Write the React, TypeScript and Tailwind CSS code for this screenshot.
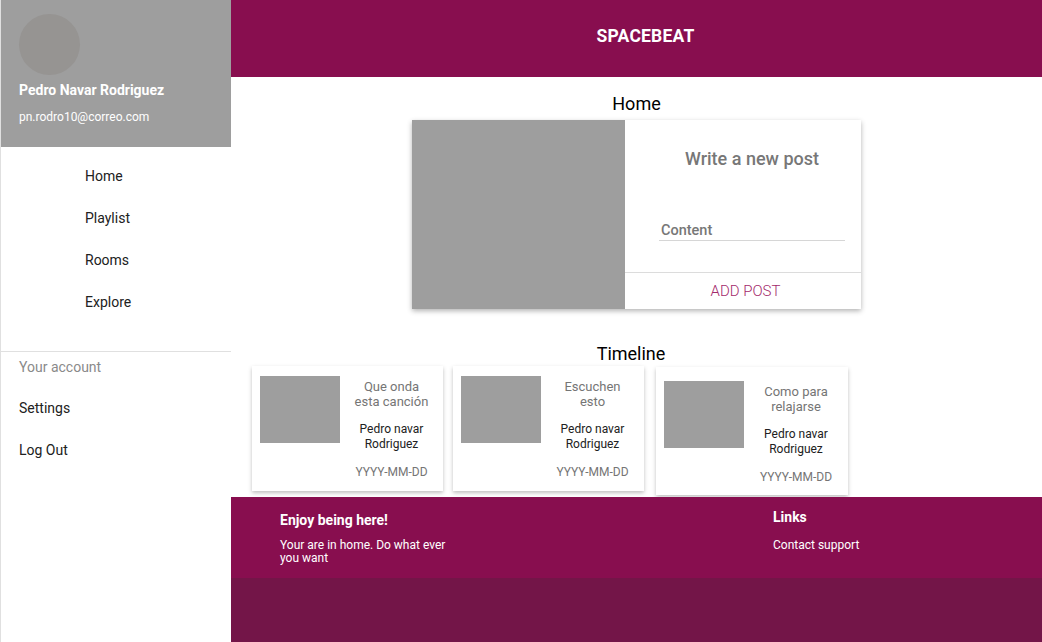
const navItems = ["Home", "Playlist", "Rooms", "Explore"];

type Post = { title: string[]; author: string[]; date: string; shifted?: boolean };

const posts: Post[] = [
  { title: ["Que onda", "esta canción"], author: ["Pedro navar", "Rodriguez"], date: "YYYY-MM-DD" },
  { title: ["Escuchen", "esto"], author: ["Pedro navar", "Rodriguez"], date: "YYYY-MM-DD" },
  { title: ["Como para", "relajarse"], author: ["Pedro navar", "Rodriguez"], date: "YYYY-MM-DD", shifted: true },
];

const PostCard = ({ post }: { post: Post }) => {
  return (
    <div
      className={
        post.shifted
          ? "w-[192px] mt-[1px] h-[128px] bg-white shadow-[0_2px_4px_rgba(0,0,0,0.25)] flex pl-[8px] pt-[14px]"
          : "w-[191px] h-[125px] bg-white shadow-[0_2px_4px_rgba(0,0,0,0.25)] flex pl-[8px] pt-[10px]"
      }
    >
      <div className="w-[80px] h-[67px] bg-[#9e9e9e] shrink-0"></div>
      <div className="flex-1 flex flex-col items-center text-center">
        <p className="text-[13px] leading-[15px] text-[#757575] pt-[3px]">
          {post.title[0]}
          <br />
          {post.title[1]}
        </p>
        <p className="text-[12px] leading-[15px] text-[#212121] mt-[13px]">
          {post.author[0]}
          <br />
          {post.author[1]}
        </p>
        <p className="text-[12px] leading-[15px] text-[#757575] mt-[13px]">{post.date}</p>
      </div>
    </div>
  );
};

export default function App() {
  return (
    <div className="w-[1042px] h-[642px] flex overflow-hidden bg-white font-['Roboto',sans-serif]">
      {/* sidebar */}
      <aside className="w-[231px] shrink-0 h-full border-l border-[#e0e0e0] flex flex-col">
        <div className="h-[147px] bg-[#9e9e9e] pt-[14px] px-[18px] text-white">
          <div className="w-[61px] h-[61px] rounded-full bg-[#969492]"></div>
          <p className="mt-[7px] text-[14px] leading-[16px] font-bold">Pedro Navar Rodriguez</p>
          <p className="mt-[11px] text-[12px] leading-[16px]">pn.rodro10@correo.com</p>
        </div>
        <nav className="pt-[8px]">
          {navItems.map((item) => (
            <div key={item} className="h-[42px] flex items-center pl-[84px] text-[14px] text-[#212121]">
              {item}
            </div>
          ))}
        </nav>
        <div className="mt-[28px] border-t border-[#e0e0e0]"></div>
        <div className="h-[30px] flex items-center pl-[18px] text-[14px] text-[#8a8a8a]">Your account</div>
        <div className="mt-[5px]">
          <div className="h-[42px] flex items-center pl-[18px] text-[14px] text-[#212121]">Settings</div>
          <div className="h-[42px] flex items-center pl-[18px] text-[14px] text-[#212121]">Log Out</div>
        </div>
      </aside>

      {/* main */}
      <main className="flex-1 flex flex-col h-full">
        <header className="h-[77px] shrink-0 bg-[#880e4f] flex items-center justify-center pl-[18px] pb-[4px]">
          <span className="text-white font-bold text-[17.5px] tracking-[0.2px]">SPACEBEAT</span>
        </header>

        <section className="flex-1 flex flex-col items-center">
          <h2 className="mt-[15px] text-[18px] leading-[24px] text-black">Home</h2>
          <div className="mt-[4px] w-[449px] h-[189px] flex bg-white shadow-[0_2px_5px_rgba(0,0,0,0.3)]">
            <div className="w-[213px] h-full bg-[#9e9e9e]"></div>
            <div className="flex-1 flex flex-col">
              <div className="h-[153px] border-b border-[#dcdcdc] pl-[34px] pr-[16px] pt-[28px]">
                <p className="text-[18px] leading-[22px] font-medium text-[#777777] text-center">Write a new post</p>
                <p className="mt-[53px] border-b border-[#d6d6d6] pb-[1px] text-[14.5px] leading-[16px] text-[#777777] font-medium pl-[2px]">
                  Content
                </p>
              </div>
              <div className="flex-1 flex items-center justify-center pl-[5px] text-[15px] font-light text-[#a3296b]">
                ADD POST
              </div>
            </div>
          </div>

          <h2 className="mt-[33px] mr-[11px] text-[18px] leading-[24px] text-black">Timeline</h2>
          <div className="self-start pl-[21px] flex items-start">
            <PostCard post={posts[0]} />
            <div className="ml-[10px]">
              <PostCard post={posts[1]} />
            </div>
            <div className="ml-[12px]">
              <PostCard post={posts[2]} />
            </div>
          </div>
        </section>

        <footer className="h-[81px] shrink-0 bg-[#880e4f] text-white flex pl-[49px]">
          <div className="w-[493px] pt-[14px]">
            <p className="text-[14px] leading-[18px] font-bold">Enjoy being here!</p>
            <p className="mt-[10px] w-[185px] text-[12px] leading-[13px]">Your are in home. Do what ever you want</p>
          </div>
          <div className="pt-[11px]">
            <p className="text-[14px] leading-[18px] font-bold">Links</p>
            <p className="mt-[13px] text-[12px] leading-[13px]">Contact support</p>
          </div>
        </footer>
        <div className="h-[64px] shrink-0 bg-[#731548]"></div>
      </main>
    </div>
  );
}
